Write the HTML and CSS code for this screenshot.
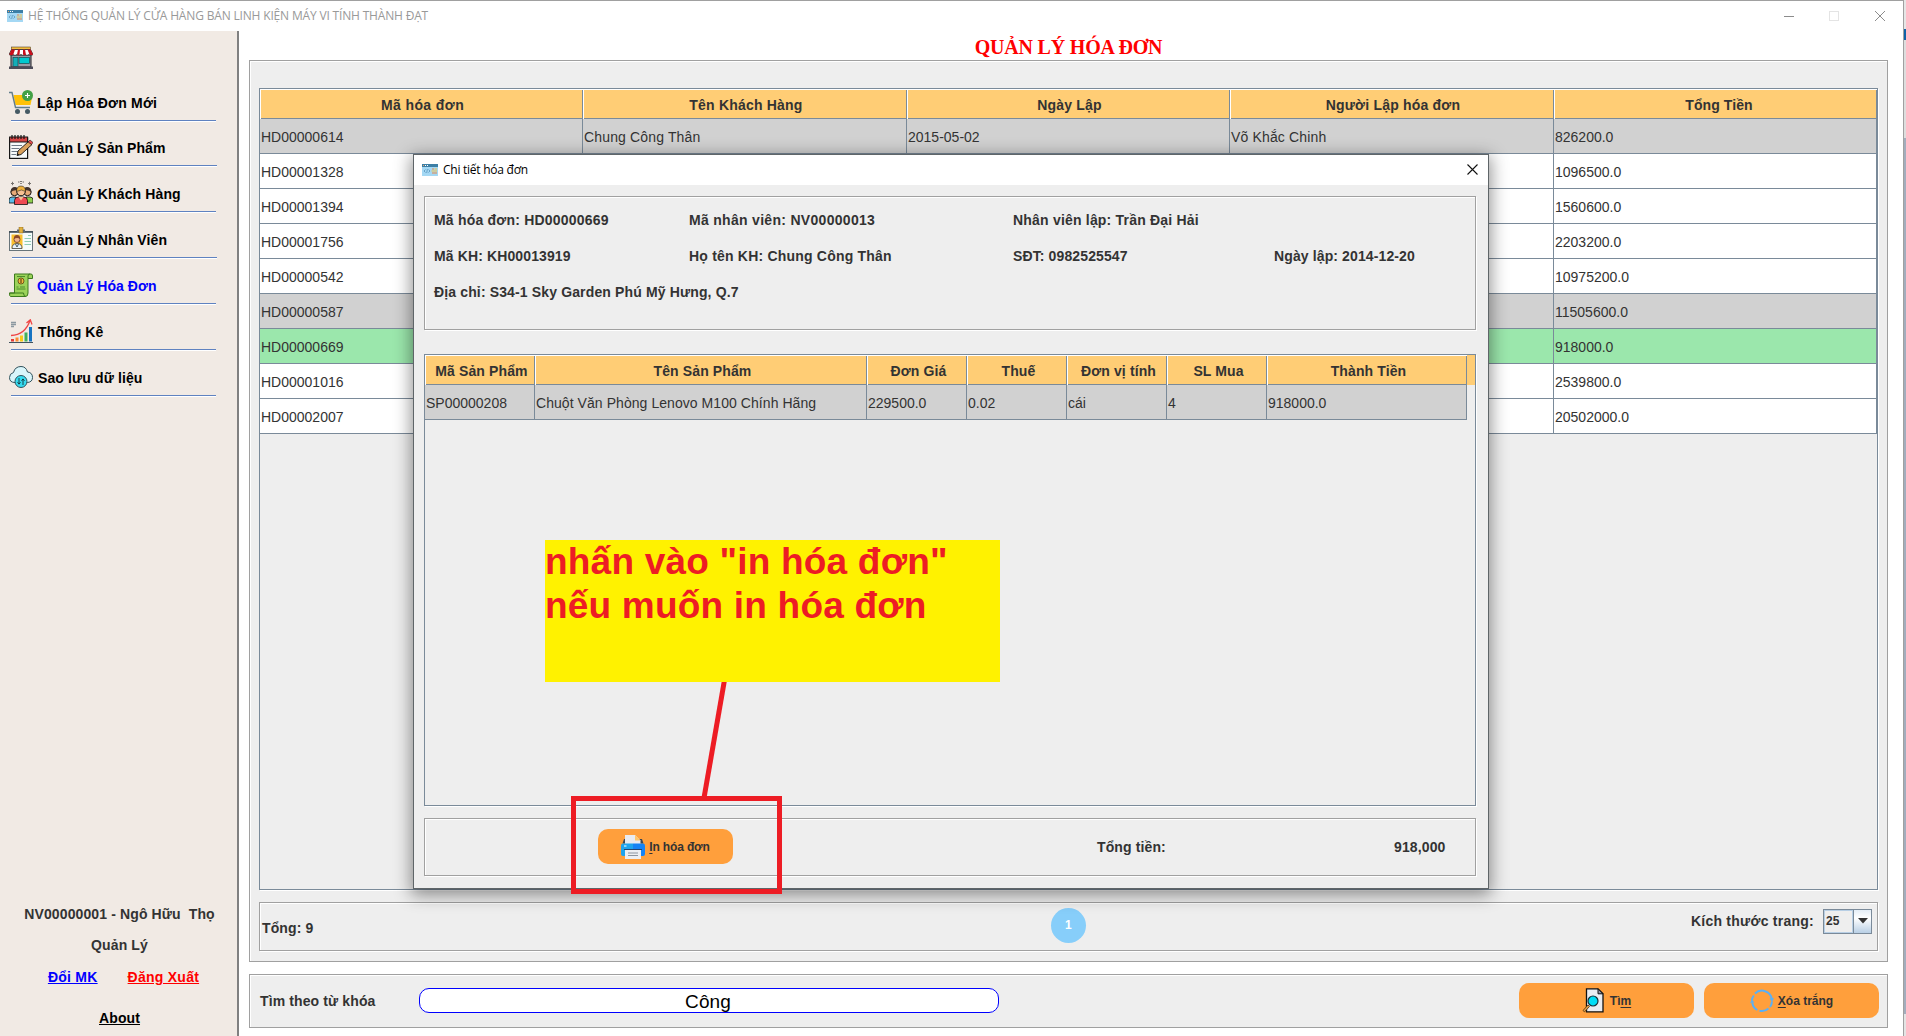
FILE: index.html
```html
<!DOCTYPE html>
<html lang="vi">
<head>
<meta charset="utf-8">
<title>Hệ thống quản lý cửa hàng</title>
<link rel="stylesheet" href="styles.css">
</head>
<body>
<svg class="defs" width="0" height="0">
  <symbol id="app" viewBox="0 0 16 12">
    <rect width="16" height="12" rx=".6" fill="#a4d8f4"/><rect width="16" height="3" fill="#3c7fa6"/>
    <path d="M1 1.5h1" stroke="#f5a060"/><path d="M3 1.5h1M5 1.5h1" stroke="#fff"/>
    <path d="M3.500 5.500 2 7l1.500 1.500M6.500 5.500 8 7 6.500 8.500M5.400 5 4.700 9" fill="none" stroke="#4f8db5" stroke-width=".7"/>
    <path d="M10 5h2M10 9h5" stroke="#e8874a"/><path d="M12.500 5H15M9.500 7H15" stroke="#f3c14c"/>
  </symbol>
</svg>
<div class="screen">
<div class="window">
  <header class="titlebar">
    <svg class="app-icon" width="16" height="12"><use href="#app"/></svg>
    <span class="caption">HỆ THỐNG QUẢN LÝ CỬA HÀNG BÁN LINH KIỆN MÁY VI TÍNH THÀNH ĐẠT</span>
    <svg class="controls" width="102" height="12" viewBox="0 0 102 12" fill="none">
      <path d="M0 6.500h10" stroke="#8c8c8c"/><rect x="45.500" y="1.500" width="9" height="9" stroke="#e4e4e4"/>
      <path d="M91 1l10 10M101 1 91 11" stroke="#8c8c8c"/>
    </svg>
  </header>
  <div class="workspace">
    <nav class="sidebar">
      <svg class="shop" width="24" height="24" viewBox="0 0 24 24">
        <rect x="2" y="9" width="20" height="12" fill="#9a9aa4" stroke="#1d1d22"/>
        <rect x="4" y="11.500" width="5" height="9" fill="#13aeb8" stroke="#164a52" stroke-width=".7"/>
        <rect x="10" y="11.500" width="10.500" height="6" fill="#00c9cf" stroke="#164a52" stroke-width=".7"/>
        <rect x="2.500" y="1" width="19" height="2.500" fill="#f2bd42" stroke="#3b2b10" stroke-width=".5"/>
        <path d="M2.500 3.500h19L24 8.500q-2 2-4 0-2 2-4 0-2 2-4 0-2 2-4 0-2 2-4 0-2 1.500-4 0z" fill="#fff" stroke="#222" stroke-width=".8"/>
        <path d="M2.500 3.500H6L4.300 8.500q-2 1.500-4 0zM9 3.500h2L10.500 9Q9 9.500 8 8.500zM14 3.500h2L17 9q-2 .5-3-.5zM18.500 3.500h3L24 8.500q-2 1-3.500 0z" fill="#c80f1c"/>
        <rect x="0" y="20.500" width="24" height="2.500" fill="#4c4b58"/>
      </svg>
      <ul class="menu">
        <li class="item first"><svg width="24" height="24" viewBox="0 0 24 24">
          <path d="M4.500 5h19l-2 10H6.500z" fill="#ffc107"/><path d="M0 2.500h3L6.500 17.500H21" fill="none" stroke="#607d8b" stroke-width="1.400"/>
          <circle cx="8.500" cy="21.500" r="2.500" fill="#455a64"/><circle cx="18.500" cy="21.500" r="2.500" fill="#455a64"/>
          <circle cx="18.500" cy="5.500" r="5.500" fill="#43a047"/><path d="M16 5.500h5M18.500 3v5" stroke="#fff" stroke-width="1.100"/></svg><span>Lập Hóa Đơn Mới</span></li>
        <li class="item odd"><svg width="24" height="24" viewBox="0 0 24 24">
          <rect x=".6" y="3" width="18" height="20.400" fill="#f7fafa" stroke="#161616" stroke-width="1.200"/>
          <rect x=".6" y="2" width="18" height="5" fill="#d64545" stroke="#161616" stroke-width="1"/>
          <path d="M3 0v4M6 0v4M9 0v4M12 0v4M15 0v4" stroke="#161616" stroke-width="1.200"/>
          <path d="M2.500 10.500H13M2.500 13.500h8M2.500 16.500H9M2.500 19.500H7" stroke="#6e7a86" stroke-width="1.100"/>
          <path d="m9 16 10.500-9.500L23 9.500 12 19.500l-4 1z" fill="#d9a05b" stroke="#161616" stroke-width=".9"/><path d="m19 7 2-2 3 2.500-1.500 2z" fill="#e5484d" stroke="#161616" stroke-width=".6"/><path d="m8 20.500.6-2.300 1.800 1.700z" fill="#161616"/></svg><span>Quản Lý Sản Phẩm</span></li>
        <li class="item"><svg width="24" height="24" viewBox="0 0 24 24">
          <path d="M0 22v-3q0-3 3-3h4v6z" fill="#5bbde8" stroke="#111" stroke-width=".8"/><path d="M17 16h4q3 0 3 3v3h-7z" fill="#8fcf4f" stroke="#111" stroke-width=".8"/>
          <circle cx="5.500" cy="11" r="3.700" fill="#e8ab78" stroke="#111"/><circle cx="18.500" cy="11" r="3.700" fill="#e8ab78" stroke="#111"/>
          <path d="M2 11q-.5-5 4-5 3 0 3.500 4-4-2-7.500 1zM22 11q.5-5-4-5-3 0-3.500 4 4-2 7.500 1z" fill="#42332d"/>
          <path d="M5.500 23.500v-4q0-3.500 4-3.500h5q4 0 4 3.500v4z" fill="#ee4a52" stroke="#111" stroke-width=".8"/><path d="m9.500 16 2.500 3.500L14.500 16z" fill="#f6c193"/>
          <circle cx="12" cy="10.500" r="4.300" fill="#f6c193" stroke="#111"/><path d="M7.500 10.500Q7.500 5 12 5t4.500 5.500Q13 7.500 7.500 10.500z" fill="#eeb13e" stroke="#111" stroke-width=".5"/>
          <path d="M3.500.8v3.400M2 2.500h3M20.500.8v3.400M19 2.500h3M9 1h1.500M11.200 2.500h1.600M13.500 1H15M11 .5h2" stroke="#77736f"/></svg><span>Quản Lý Khách Hàng</span></li>
        <li class="item odd"><svg width="24" height="24" viewBox="0 0 24 24">
          <rect x=".5" y="4.500" width="23" height="19" fill="#f5fbfb" stroke="#68747a"/><path d="M0 5h24" stroke="#394650" stroke-width="1.500"/>
          <rect x="8" y="2.500" width="8" height="2.500" fill="#5f6d78"/><rect x="10" y="0" width="4" height="6" fill="#e2b13c" stroke="#7d5b1c" stroke-width=".5"/>
          <rect x="2.500" y="7.500" width="11" height="14" fill="#fbc02d"/><path d="M3 21.500q0-5 5-5t5 5z" fill="#e9f3f8" stroke="#444" stroke-width=".8"/>
          <circle cx="8" cy="12.500" r="3" fill="#f3b58c" stroke="#6a3b2a" stroke-width=".8"/><path d="M4.800 12q0-4 3.200-4t3.200 4q-3-2-6.400 0z" fill="#8a4a2b"/><path d="m6.500 17 1.500 3 1.500-3" fill="none" stroke="#48606a"/>
          <path d="M19 8.500h3M15.500 11.500H22M15.500 14.500H22M15.500 17.500H22" stroke="#8fcdb5"/></svg><span>Quản Lý Nhân Viên</span></li>
        <li class="item active"><svg width="24" height="24" viewBox="0 0 24 24">
          <path d="M5.500 1H22q1.500 0 1.500 2v2.500H19V20q0 3.500-2.500 3.500h-15Q.5 23.500.5 20H5.500z" fill="#9bd35a" stroke="#3c7a1e"/>
          <path d="M19 5.500V3q0-2 2-2M.5 20h14q0 3.500 2.500 3.500" fill="none" stroke="#3c7a1e"/>
          <path d="M8 3.500h8M7.500 14h2M11 14h5M7.500 16h9" stroke="#4d8c2c"/><circle cx="12" cy="8" r="3" fill="#f4b93c" stroke="#583f14" stroke-width=".8"/><path d="M12 6v4M11 7h2M11 9h2" stroke="#583f14" stroke-width=".7"/></svg><span>Quản Lý Hóa Đơn</span></li>
        <li class="item wide"><svg width="24" height="24" viewBox="0 0 24 24">
          <path d="M2 3.500h5M2 5.500h5M2 7.500h3" stroke="#8b98a0" stroke-width="1.300"/>
          <rect x="2" y="20" width="3" height="2.500" fill="#e53935"/><rect x="6.500" y="18.500" width="3" height="4" fill="#fb8c33"/><rect x="11" y="16.500" width="3" height="6" fill="#fbc918"/><rect x="15.500" y="13.500" width="3" height="9" fill="#43b05c"/><rect x="20" y="8" width="3" height="14.500" fill="#1673c2"/>
          <path d="M2 16.500Q16 16 21 1.500M17.500 4 21.300.8 23 5.500" fill="none" stroke="#ef4545" stroke-width="1.300"/><path d="M0 23.500h24" stroke="#40525e"/></svg><span>Thống Kê</span></li>
        <li class="item wide"><svg width="24" height="24" viewBox="0 0 24 24">
          <path d="M6 17.500Q.5 17.500.5 12.500q0-4 4-5Q6 1.500 12 1.500q5 0 6.500 5.500 5 .5 5 5.500 0 4.500-5 5z" fill="#d9f5fa" stroke="#31525c"/>
          <circle cx="12" cy="16.500" r="6" fill="#35dcf0" stroke="#31525c"/><path d="M10 13v6M8.500 17.300l1.500 1.900 1.500-1.900M14 20v-6M12.500 15.800l1.500-1.900 1.500 1.900" fill="none" stroke="#12333c" stroke-width=".9"/></svg><span>Sao lưu dữ liệu</span></li>
      </ul>
      <div class="account">
        <p class="user">NV00000001 - Ngô Hữu&nbsp; Thọ</p>
        <p class="role">Quản Lý</p>
        <p class="links"><a class="change">Đổi MK</a><a class="logout">Đăng Xuất</a></p>
        <a class="about">About</a>
      </div>
    </nav>
    <main class="content">
      <h1>QUẢN LÝ HÓA ĐƠN</h1>
      <section class="etched list-panel">
        <div class="grid-frame main-frame">
          <div class="grid main-grid">
            <div class="th loose">Mã hóa đơn</div><div class="th">Tên Khách Hàng</div><div class="th">Ngày Lập</div><div class="th">Người Lập hóa đơn</div><div class="th last">Tổng Tiền</div>
            <div class="td gray">HD00000614</div><div class="td gray name">Chung Công Thân</div><div class="td gray">2015-05-02</div><div class="td gray name">Võ Khắc Chinh</div><div class="td gray">826200.0</div>
            <div class="td">HD00001328</div><div class="td"></div><div class="td"></div><div class="td"></div><div class="td">1096500.0</div>
            <div class="td">HD00001394</div><div class="td"></div><div class="td"></div><div class="td"></div><div class="td">1560600.0</div>
            <div class="td">HD00001756</div><div class="td"></div><div class="td"></div><div class="td"></div><div class="td">2203200.0</div>
            <div class="td">HD00000542</div><div class="td"></div><div class="td"></div><div class="td"></div><div class="td">10975200.0</div>
            <div class="td gray">HD00000587</div><div class="td gray"></div><div class="td gray"></div><div class="td gray"></div><div class="td gray">11505600.0</div>
            <div class="td green">HD00000669</div><div class="td green"></div><div class="td green"></div><div class="td green"></div><div class="td green">918000.0</div>
            <div class="td">HD00001016</div><div class="td"></div><div class="td"></div><div class="td"></div><div class="td">2539800.0</div>
            <div class="td">HD00002007</div><div class="td"></div><div class="td"></div><div class="td"></div><div class="td">20502000.0</div>
          </div>
        </div>
        <div class="etched pager">
          <span class="total">Tổng: 9</span>
          <span class="page">1</span>
          <span class="size"><span class="size-label">Kích thước trang:</span>
            <span class="combo"><span class="combo-value">25</span><span class="combo-arrow"><svg width="10" height="6" viewBox="0 0 10 6"><path d="M0 0h10L5 5.500z" fill="#333"/></svg></span></span>
          </span>
        </div>
      </section>
      <section class="etched search">
        <label>Tìm theo từ khóa</label>
        <div class="field">Công</div>
        <div class="btn find"><svg width="24" height="25" viewBox="0 0 24 25">
          <path d="M4.500.8h11.500l5 5v18H4.500z" fill="#e9ecf2" stroke="#111" stroke-width="1.300"/><path d="M16 .8v5h5z" fill="#8d93a8" stroke="#111"/>
          <path d="m6 17-5 5.500 1.500 1.300 5-5.300z" fill="#e3a04a" stroke="#5a3b14" stroke-width=".9"/><circle cx="11" cy="13" r="5" fill="#00dcf5" stroke="#14303a" stroke-width="1.200"/></svg><span>Tì<u>m</u></span></div>
        <div class="btn clear"><svg width="24" height="24" viewBox="0 0 24 24" fill="none">
          <path d="M5 4.500A10 10 0 0 1 21.800 10M2.300 14a10 10 0 0 0 5 7M1.800 11.500a10 10 0 0 1 2-5M9.500 21.700a10 10 0 0 0 9-2.200M20 18a10 10 0 0 0 2-5.500" stroke="#5ab0f5" stroke-width="2"/><path d="m19.500 9.500 2.500 3.500 2-4zM0 14l2-3.500L4.500 13.500z" fill="#5ab0f5"/></svg><span><u>X</u>óa trắng</span></div>
      </section>
    </main>
  </div>
</div>
<div class="desk"><i class="d1"></i><i class="d2"></i><i class="d3"></i><i class="d4"></i><i class="d5"></i></div>
</div>

<section class="dialog">
  <header class="dialog-title">
    <svg width="16" height="12"><use href="#app"/></svg><span>Chi tiết hóa đơn</span>
    <svg class="close" width="11" height="11" viewBox="0 0 11 11"><path d="m.5.5 10 10M10.500.5l-10 10" stroke="#111" stroke-width="1.100"/></svg>
  </header>
  <div class="etched info">
    <span>Mã hóa đơn: HD00000669</span><span class="loose">Mã nhân viên: NV00000013</span><span>Nhân viên lập: Trần Đại Hải</span><span></span>
    <span class="tight">Mã KH: KH00013919</span><span>Họ tên KH: Chung Công Thân</span><span class="tight">SĐT: 0982525547</span><span class="tight">Ngày lập: 2014-12-20</span>
    <span class="address">Địa chỉ: S34-1 Sky Garden Phú Mỹ Hưng, Q.7</span>
  </div>
  <div class="grid-frame detail-frame">
    <div class="grid detail-grid">
      <div class="th">Mã Sản Phẩm</div><div class="th">Tên Sản Phẩm</div><div class="th">Đơn Giá</div><div class="th">Thuế</div><div class="th">Đơn vị tính</div><div class="th">SL Mua</div><div class="th">Thành Tiền</div><div class="corner"></div>
      <div class="td gray">SP00000208</div><div class="td gray product">Chuột Văn Phòng Lenovo M100 Chính Hãng</div><div class="td gray">229500.0</div><div class="td gray">0.02</div><div class="td gray">cái</div><div class="td gray">4</div><div class="td gray">918000.0</div>
    </div>
  </div>
  <div class="etched summary">
    <div class="btn print"><svg width="24" height="24" viewBox="0 0 24 24">
      <path d="M1.500 8.500 3 4h18l1.500 4.500z" fill="#3a4654"/><path d="M4 0h10l5.500 5.500V9H4z" fill="#e9ebf0"/><path d="M14 0v5.500h5.500z" fill="#ffc56b"/>
      <path d="M2 8.500h10V21H2q-2 0-2-2v-8.500q0-2 2-2z" fill="#1ea4ee"/><path d="M12 8.500h10q2 0 2 2V19q0 2-2 2H12z" fill="#1583f5"/><path d="M3 14.500h18" stroke="#27466e"/><path d="M4 15h16v9H4z" fill="#eceef2"/><path d="M7 18h10M7 20.500h10" stroke="#8c95a0"/><path d="M3 11h2.500" stroke="#fff"/></svg><span><u>I</u>n hóa đơn</span></div>
    <span class="sum-label">Tổng tiền:</span><span class="sum-value">918,000</span>
  </div>
</section>

<div class="note">nhấn vào "in hóa đơn"<br>nếu muốn in hóa đơn</div>
<svg class="pointer" width="36" height="116" viewBox="0 0 36 116"><path d="M25.500-2 5 116" stroke="#ed1c24" stroke-width="5"/></svg>
<div class="marker"></div>
</body>
</html>
```
FILE: styles.css
```css
* { box-sizing: border-box; }
body { margin: 0; width: 1906px; height: 1036px; overflow: hidden; position: relative; background: #fff; color: #333; font: bold 14px/16px "Liberation Sans", Arial, sans-serif; letter-spacing: .12px; }
p, h1, ul { margin: 0; padding: 0; list-style: none; }
.defs { position: absolute; }
svg { display: block; flex: none; }
span, a { white-space: pre; }

.screen { display: flex; height: 1036px; }
.window { width: 1904px; display: flex; flex-direction: column; border-top: 1px solid #a0a0a0; border-right: 1px solid #a0a0a0; background: #fff; }
.desk { width: 2px; display: flex; flex-direction: column; }
.desk i { display: block; }
.d1 { height: 29px; background: #e6e6e6; }
.d2 { height: 11px; background: #0f62a8; }
.d3 { height: 98px; background: #dedede; }
.d4 { height: 876px; background: #a3adbd; }
.d5 { flex: 1; background: #e4e4e4; }

.titlebar { height: 30px; display: flex; align-items: center; padding: 0 17px 1px 7px; font: 12px/16px "Open Sans", "Noto Sans", sans-serif; color: #999; }
.titlebar .caption { margin-left: 5px; letter-spacing: -.17px; }
.controls { margin-left: auto; }
.workspace { flex: 1; display: flex; min-height: 0; }

.sidebar { width: 239px; background: #f1eae4; border-right: 2px solid #808080; display: flex; flex-direction: column; padding-top: 15px; color: #000; }
.shop { margin-left: 9px; }
.menu { margin-top: 16px; }
.item { height: 46px; display: flex; padding: 14px 0 0 9px; margin-left: 0; background: linear-gradient(#5f82c0, #5f82c0) 11px 44px / 205px 1px no-repeat, linear-gradient(#fff, #fff) 11px 45px / 205px 1px no-repeat; }
.item.first { height: 36px; padding-top: 4px; background-position: 11px 34px, 11px 35px; }
.item.odd { background-position: 12px 44px, 12px 45px; }
.item.first + .item { height: 45px; padding-top: 13px; background-position: 12px 43px, 12px 44px; letter-spacing: .05px; }
.item span { margin: 5px 0 0 4px; }
.item.first span { letter-spacing: .2px; }
.item.wide span { margin-left: 5px; }
.item.active { color: #00f; letter-spacing: .05px; }
.account { margin-top: auto; display: flex; flex-direction: column; align-items: center; color: #333; padding: 0 0 10px 2px; height: 130px; }
.role { margin-top: 15px; }
.links { display: flex; gap: 30px; margin: 16px 0 0 8px; letter-spacing: .25px; }
.links a, .about { text-decoration: underline; text-underline-offset: 1px; }
.change { color: #00f; }
.logout { color: #f00; }
.about { margin-top: 25px; color: #000; }

.content { flex: 1; display: flex; flex-direction: column; padding: 0 15px 8px 10px; }
h1 { height: 29px; text-align: center; font: bold 20px/33px "Liberation Serif", "Times New Roman", serif; color: #f00; letter-spacing: -.2px; }
.etched { background: #eee; border: 1px solid #a0a0a0; box-shadow: inset 1px 1px #fff, 1px 1px #fff; }
.list-panel { height: 902px; padding: 27px 9px 10px; }
.grid-frame { border: 1px solid #7a8a99; box-shadow: 1px 1px #fff; }
.main-frame { height: 802px; }
.grid { display: grid; grid-auto-rows: 35px; }
.main-grid { grid-template: 30px / 323px 324px 323px 324px 323px; }
.th { background: #ffcd75; border: solid #fff; border-width: 1px 0 0 1px; box-shadow: inset -1px -1px #7a8a99; text-align: center; line-height: 31px; white-space: pre; letter-spacing: .2px; padding-left: 1px; }
.th.last { padding-left: 6px; letter-spacing: .1px; }
.th.loose { letter-spacing: .4px; }
.td { background: #fff; border: solid #7a8a99; border-width: 0 1px 1px 0; font-weight: normal; line-height: 36px; height: 35px; overflow: hidden; padding-left: 1px; white-space: pre; letter-spacing: 0; }
.name { letter-spacing: .15px; }
.product { letter-spacing: .06px; }
.gray { background: #d1d1d1; }
.green { background: #9be7ac; }
.pager { height: 49px; margin-top: 12px; display: grid; grid-template-columns: 1fr auto 1fr; align-items: center; padding: 0 5px 2px 2px; }
.total { padding-top: 4px; }
.page { width: 35px; height: 35px; margin-left: 3px; border-radius: 50%; background: #87cefa; color: #fff; font-size: 12px; line-height: 35px; text-align: center; }
.size { display: flex; justify-content: flex-end; align-items: center; gap: 9px; margin: -9px 0 0 0; }
.size-label { letter-spacing: .25px; }
.combo { display: flex; width: 49px; height: 25px; border: 1px solid #7a8a99; font-size: 12px; line-height: 21px; }
.combo-value { width: 29px; border: 1px solid #b8cfe5; padding-left: 1px; }
.combo-arrow { flex: 1; display: flex; align-items: center; justify-content: center; border-left: 1px solid #7a8a99; background: linear-gradient(#e4edf6, #fff 35%, #b8cfe5); }
.search { height: 54px; margin-top: 12px; display: flex; align-items: center; padding: 0 8px 1px 10px; }
.search label { width: 159px; padding-top: 1px; }
.field { width: 580px; height: 25px; border: 1px solid #00f; border-radius: 10px; background: #fff; color: #000; font: 19px/25px "Liberation Sans", Arial, sans-serif; text-align: center; padding-right: 2px; }
.btn { display: flex; align-items: center; justify-content: center; height: 35px; border-radius: 10px; background: #ff9f3c; font-size: 12px; letter-spacing: 0; }
.btn u { text-underline-offset: 2px; }
.find { width: 175px; margin-left: auto; gap: 4px; }
.clear { width: 175px; margin-left: 10px; gap: 4px; }

.dialog { position: absolute; left: 413px; top: 154px; width: 1076px; height: 735px; border: 1px solid #5f6568; background: #eee; box-shadow: 0 4px 16px 2px rgba(0,0,0,.42); padding: 0 12px 0 10px; }
.dialog-title { height: 30px; margin: 0 -12px 0 -10px; padding: 0 10px 1px 8px; display: flex; align-items: center; background: #fff; color: #000; font: 12px/16px "Open Sans", "Noto Sans", sans-serif; }
.dialog-title span { margin-left: 5px; letter-spacing: -.25px; }
.close { margin-left: auto; }
.info { margin-top: 11px; height: 134px; display: grid; grid-template: 36px 36px 36px / 255px 324px 261px 1fr; padding: 15px 0 0 9px; letter-spacing: .2px; }
.info .address { grid-column: 1 / 4; letter-spacing: .14px; }
.info .loose { letter-spacing: .3px; }
.info .tight { letter-spacing: .12px; }
.detail-frame { margin-top: 24px; height: 452px; }
.detail-grid { grid-template: 30px / 110px 332px 100px 100px 100px 100px 200px 8px; }
.detail-grid .th { letter-spacing: .12px; padding-left: 2px; }
.corner { background: #ffcd75; }
.summary { height: 58px; margin-top: 12px; display: flex; align-items: center; padding: 0 0 1px 173px; }
.print { width: 135px; gap: 4px; letter-spacing: -.15px; }
.sum-label { width: 297px; margin-left: 364px; }

.note { position: absolute; left: 545px; top: 540px; width: 455px; height: 142px; background: #fff200; color: #ed1c24; font-size: 37px; line-height: 44px; letter-spacing: .2px; white-space: nowrap; }
.pointer { position: absolute; left: 699px; top: 682px; }
.marker { position: absolute; left: 571px; top: 796px; width: 211px; height: 98px; border: 5px solid #ed1c24; }
```
